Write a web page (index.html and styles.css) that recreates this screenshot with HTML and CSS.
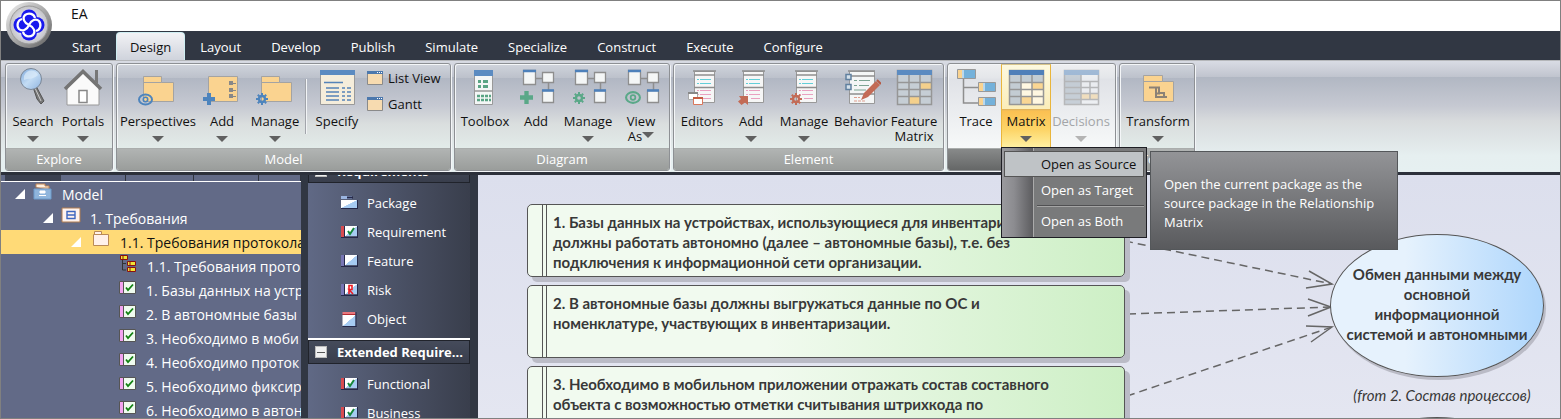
FILE: index.html
```html
<!DOCTYPE html>
<html lang="en">
<head>
<meta charset="utf-8">
<title>EA</title>
<link rel="stylesheet" href="styles.css">
</head>
<body>
<svg class="defs" aria-hidden="true">
  <defs>
    <linearGradient id="lens" x1="0" y1="0" x2="1" y2="1"><stop offset="0" stop-color="#7fa9dc"/><stop offset=".5" stop-color="#c3dcf4"/><stop offset="1" stop-color="#8fb4e0"/></linearGradient>
    <linearGradient id="diag" x1="0" y1="0" x2="1" y2="1"><stop offset=".5" stop-color="#fff"/><stop offset=".52" stop-color="#a6cbf2"/></linearGradient>
    <linearGradient id="ring" x1="0" y1="0" x2="1" y2="1"><stop offset="0" stop-color="#f4f4f4"/><stop offset=".5" stop-color="#a9a9a9"/><stop offset="1" stop-color="#5e5e5e"/></linearGradient>
    <radialGradient id="orb"><stop offset="0" stop-color="#fff"/><stop offset=".6" stop-color="#dcdcec"/><stop offset="1" stop-color="#c4c4c4"/></radialGradient>
    <symbol id="gear" viewBox="0 0 12 12"><g fill="none" stroke="currentColor"><circle cx="6" cy="6" r="3" stroke-width="2.4"/><path d="M6 0v2.500M6 9.500V12M0 6h2.500M9.500 6H12M1.800 1.800l1.800 1.800M8.400 8.400l1.800 1.800M1.800 10.200l1.800-1.800M8.400 3.600l1.800-1.800" stroke-width="2"/></g></symbol>
    <symbol id="plus" viewBox="0 0 12 12"><path d="M4 0h4v4h4v4H8v4H4V8H0V4h4z" fill="currentColor"/></symbol>
    <symbol id="eye" viewBox="0 0 15 12"><ellipse cx="7.500" cy="6" rx="6.500" ry="5" fill="none" stroke="currentColor" stroke-width="2"/><circle cx="7.500" cy="6" r="2.200" fill="none" stroke="currentColor" stroke-width="1.600"/></symbol>
    <symbol id="search" viewBox="0 0 40 40"><path d="M20 21l3-1 8 15-3 3-4-5z" fill="#777" stroke="#555"/><path d="M22 22l6 13" stroke="#ccc"/><circle cx="18" cy="13" r="10.500" fill="url(#lens)" stroke="#7b8796"/><path d="M11 14c4-2 9 0 14-5-3-6-11-6-14 1z" fill="#dcebfa" opacity=".7"/></symbol>
    <symbol id="home" viewBox="0 0 40 40"><path d="M32 4h3v15h-3z" fill="#777"/><path d="M4 19L20 5l16 14v20H4z" fill="#fafafa" stroke="#999"/><path d="M2 23L20 5.500 38 23" fill="none" stroke="#747474" stroke-width="3.500"/><path d="M16 24.500h8v12h-8z" fill="#fff" stroke="#888" stroke-width="1.500"/></symbol>
    <symbol id="persp" viewBox="0 1 40 40"><path d="M5.500 36.500v-25h18v6h12v19z" fill="#fad390" stroke="#a3a3a3"/><path d="M5.500 17.500h18" stroke="#a3a3a3"/><use href="#eye" x="0" y="28" width="15" height="13" color="#4d84bd"/></symbol>
    <symbol id="modadd" viewBox="0 1 40 40"><path d="M6.500 11.500h29v25h-29z" fill="#fad390" stroke="#a3a3a3"/><g fill="#888"><path d="M27 16h4v4h-4zM27 23h4v4h-4zM27 29h4v4h-4z"/><path d="M31 18.500h3M31 25.500h3M31 31.500h3" stroke="#888"/></g><use href="#plus" x="1" y="28" width="12" height="12" color="#4d84bd"/></symbol>
    <symbol id="modman" viewBox="0 1 40 40"><path d="M6.500 36.500v-25h18v6h12v19z" fill="#fad390" stroke="#a3a3a3"/><path d="M6.500 17.500h18" stroke="#a3a3a3"/><use href="#gear" x="1" y="28" width="12" height="12" color="#4d84bd"/></symbol>
    <symbol id="specify" viewBox="0 0 40 40"><path d="M3.500 4.500h34v34h-34z" fill="#f5eddb" stroke="#999"/><path d="M3 4h35v5H3z" fill="#5b8bc1"/><path d="M7 16.500h19M9 22h13M9 26h13M9 30h13M9 34h13" stroke="#5583b8" stroke-width="1.500"/><path d="M25 22h3M30 22h4M25 26h3M30 26h4M25 30h3M30 30h4M25 34h3M30 34h4" stroke="#5583b8" stroke-width="1.500"/></symbol>
    <symbol id="win" viewBox="0 0 16 14"><path d="M.5.5h15v13H.5z" fill="#f7dbb0" stroke="#8a8a8a"/><path d="M0 0h16v3H0z" fill="#4c78ad"/><path d="M10 1.500h1M12 1.500h1M14 1.500h1" stroke="#fff"/></symbol>
    <symbol id="toolbox" viewBox="0 0 40 40"><path d="M9.500 4.500h18v34h-18z" fill="#f4f6f6" stroke="#999"/><path d="M9 4h19v6H9z" fill="#5b8bc1"/><path d="M9 25h19" stroke="#999" stroke-width="1.500"/><g stroke="#59a484" stroke-width="3"><path d="M13 15.500h3M18 15.500h5M13 20.500h3M18 20.500h5"/><path d="M12 30h3M16 30h3M20 30h3M24 30h2M12 34h3M16 34h3M20 34h3M24 34h2" stroke-width="2.500"/></g></symbol>
    <symbol id="nodes" viewBox="0 0 40 40"><path d="M19 12.500h8M32.500 17v9" stroke="#8e8e8e" stroke-width="1.500"/><g fill="#f4f6f6" stroke="#8e8e8e" stroke-width="1.300"><path d="M7.500 4.500h12v14h-12zM26.500 6.500h11v10h-11zM26.500 24.500h11v12h-11z"/></g><path d="M7 5h13M26 24.500h12" stroke="#4d80ba" stroke-width="2.500"/></symbol>
    <symbol id="doc" viewBox="0 0 40 40"><path d="M12.500 5.500h20v31h-20z" fill="#f6f6f6" stroke="#999"/><path d="M11 5h23M12 9h21M12 21.500h21" stroke="#8e8e8e" stroke-width="1.500"/><path d="M15 13.500h2M18 13.500h11M15 17.500h2M18 17.500h11" stroke="#62cfd8"/><path d="M15 24.500h2M18 24.500h11M15 28.500h2M18 28.500h11M20 32.500h9" stroke="#e9a0c0"/></symbol>
    <symbol id="editors" viewBox="0 0 40 40"><use href="#doc"/><path d="M6.500 26.500h9v7h-9z" fill="#fff" stroke="#aaa"/><path d="M6 27h10" stroke="#888" stroke-width="2"/><path d="M11.500 31.500h9v7h-9z" fill="#fff" stroke="#d9775c"/><path d="M11 32h10" stroke="#c45c42" stroke-width="2"/></symbol>
    <symbol id="eladd" viewBox="0 0 40 40"><use href="#doc"/><path d="M8 30h9v9l-3-2.500-3.500 2.500-3.500-3.500L10 33z" fill="#c36b56"/></symbol>
    <symbol id="behavior" viewBox="0 0 40 40"><path d="M8.500 5.500h25v32h-25z" fill="#f4f6f6" stroke="#999"/><path d="M7 5h27M8 10h26M8 28h26" stroke="#8e8e8e" stroke-width="1.300"/><path d="M13 14.500h3M18 14.500h11M13 19.500h3M18 19.500h10M13 24h12" stroke="#7ba492"/><path d="M13 31.500h6M13 35h11" stroke="#df9d8d" stroke-dasharray="3 1"/><path d="M5 8.500h5v5H5zM5 18.500h5v5H5z" fill="#d4e0ea" stroke="#60809f" stroke-width="1.500"/><path d="M20 34l3-7 12-12 4 4-12 12z" fill="#c36b56"/><path d="M36 14l4 4" stroke="#b65843" stroke-width="2"/></symbol>
    <symbol id="fmatrix" viewBox="0 0 40 40"><path d="M3 4h35v35H3z" fill="#c6ced5"/><path d="M26 17h12v7H26zM15 31h11v8H15z" fill="#f4d08c"/><path d="M15 9v30M26 9v30M3 16.500h35M3 23.500h35M3 30.500h35M3.500 4.500h34v34h-34z" fill="none" stroke="#969696" stroke-width="1.500"/><path d="M3 4h35v5H3z" fill="#5b8bc1"/></symbol>
    <symbol id="matrix" viewBox="0 0 40 40"><path d="M3 4h35v35H3z" fill="#fff7e1"/><path d="M3 9h12v30H3zM15 9h23v7H15z" fill="#c3ccd3"/><path d="M26 16h12v8H26zM15 31h11v8H15z" fill="#fad693"/><path d="M15 9v30M26 9v30M3 16.500h35M3 23.500h35M3 30.500h35M3.500 4.500h34v34h-34z" fill="none" stroke="#969696" stroke-width="1.500"/><path d="M3 4h35v5H3z" fill="#4f7fb9"/></symbol>
    <symbol id="decisions" viewBox="0 0 40 40"><path d="M3 4h35v35H3z" fill="#f2f5f8"/><path d="M3 9h17v30H3z" fill="#a8b6c2"/><path d="M20 28h18v6H20z" fill="#fad693"/><path d="M20 9v30M29 15v19M3 15.500h35M3 21.500h35M3 27.500h35M3 33.500h35M3.500 4.500h34v34h-34z" fill="none" stroke="#888" stroke-width="1.500"/><path d="M3 4h35v5H3z" fill="#5b8bc1"/></symbol>
    <symbol id="trace" viewBox="0 0 40 40"><path d="M7.500 13v24H23M7.500 21.500H23" fill="none" stroke="#8e8e8e" stroke-width="1.500"/><g fill="#74b1da" stroke="#999"><path d="M1.500 3.500h18v9h-18zM22.500 16.500h17v9h-17zM22.500 31.500h17v8h-17z"/></g><path d="M2 4h4v8H2zM23 17h4v8h-4zM23 32h4v7h-4z" fill="#fad390"/><path d="M7 4v8M28 17v8M28 32v7" stroke="#fff"/></symbol>
    <symbol id="transform" viewBox="0 0 40 40"><path d="M5.500 35.500v-26h19v6h11v20z" fill="#fad390" stroke="#a3a3a3"/><path d="M5.500 15.500h19" stroke="#a3a3a3"/><path d="M11 21.500h10v6h-3M18 21.500v9.500h11M21 27h5v4" fill="none" stroke="#8b8276" stroke-width="2"/></symbol>
    <symbol id="req" viewBox="0 0 17 13"><path d="M.5.500h16v12H.5z" fill="#effbef" stroke="#555"/><path d="M1 1h3v11H1z" fill="#f2a4f0"/><path d="M4.500 1v11" stroke="#555"/><path d="M7 6.500l2 2.500 5-5.500" fill="none" stroke="#118011" stroke-width="1.800"/></symbol>
    <symbol id="tbreq" viewBox="0 0 17 13"><path d="M4 1h12v10H4z" fill="url(#diag)"/><path d="M0 1h3v11H0z" fill="#d84b50"/><path d="M0 12.500h17M16.500 1v12M3.500 1v11" stroke="#252849"/><path d="M7 6l2 3 4-6" fill="none" stroke="#16873a" stroke-width="2"/></symbol>
    <symbol id="tbfeat" viewBox="0 0 17 13"><path d="M4 1h12v10H4z" fill="url(#diag)"/><path d="M0 1h3v11H0z" fill="#7775b4"/><path d="M0 12.500h17M16.500 1v12M3.500 1v11" stroke="#252849"/></symbol>
    <symbol id="tbrisk" viewBox="0 0 17 13"><path d="M4 1h12v10H4z" fill="url(#diag)"/><path d="M0 1h3v11H0z" fill="#7775b4"/><path d="M0 12.500h17M16.500 1v12M3.500 1v11" stroke="#252849"/><path d="M8 11V2.500h3v4H8l4 4.500" fill="none" stroke="#ed1c24" stroke-width="1.600"/></symbol>
    <symbol id="tbpkg" viewBox="0 0 17 13"><path d="M0 0h11v3H0z" fill="#9bb5e0"/><path d="M6 1.500h6" stroke="#252849" stroke-width="2"/><path d="M0 4h16v8H0z" fill="url(#diag)"/><path d="M0 12.500h17M16.500 4v9" stroke="#252849"/></symbol>
    <symbol id="tbobj" viewBox="0 0 16 16"><path d="M1 4h13v11H1z" fill="url(#diag)"/><path d="M1 1h13v2H1z" fill="#e8777c"/><path d="M1 3.500h13" stroke="#b62b32"/><path d="M1 15.500h14M14.500 1v15" stroke="#252849"/></symbol>
  </defs>
</svg>
<div class="window">
  <header class="titlebar">EA</header>
  <button class="orb" aria-label="Application menu">
    <svg viewBox="0 0 48 48"><circle cx="24" cy="24" r="23" fill="url(#ring)"/><circle cx="24" cy="24" r="19" fill="url(#orb)" stroke="#999"/><g fill="#1919ee"><circle cx="24" cy="16.500" r="8"/><circle cx="31.500" cy="24" r="8"/><circle cx="24" cy="31.500" r="8"/><circle cx="16.500" cy="24" r="8"/></g><g fill="none" stroke="#fff" stroke-width="2.200"><path d="M24 24c-5-2-7-7-4-10 4-3 9-1 10 3M24 24c2-5 7-7 10-4 3 4 1 9-3 10M24 24c5 2 7 7 4 10-4 3-9 1-10-3M24 24c-2 5-7 7-10 4-3-4-1-9 3-10"/></g></svg>
  </button>
  <nav class="tabs">
    <button class="tab">Start</button><button class="tab active">Design</button><button class="tab">Layout</button><button class="tab">Develop</button><button class="tab">Publish</button><button class="tab">Simulate</button><button class="tab">Specialize</button><button class="tab">Construct</button><button class="tab">Execute</button><button class="tab">Configure</button>
  </nav>
  <section class="ribbon">
    <div class="group g-explore">
      <div class="tools">
        <button class="tool w50"><svg class="ico"><use href="#search"/></svg>Search<i class="caret"></i></button>
        <button class="tool w50"><svg class="ico"><use href="#home"/></svg>Portals<i class="caret"></i></button>
      </div>
      <div class="caption">Explore</div>
    </div>
    <div class="group g-model">
      <div class="tools">
        <button class="tool w82"><svg class="ico"><use href="#persp"/></svg>Perspectives<i class="caret"></i></button>
        <button class="tool w46"><svg class="ico"><use href="#modadd"/></svg>Add<i class="caret"></i></button>
        <button class="tool w60"><svg class="ico"><use href="#modman"/></svg>Manage<i class="caret"></i></button>
        <span class="divider"></span>
        <button class="tool w60"><svg class="ico"><use href="#specify"/></svg>Specify</button>
        <div class="stack">
          <button class="mini"><svg class="win"><use href="#win"/></svg>List View</button>
          <button class="mini"><svg class="win"><use href="#win"/></svg>Gantt</button>
        </div>
      </div>
      <div class="caption">Model</div>
    </div>
    <div class="group g-diagram">
      <div class="tools">
        <button class="tool w56"><svg class="ico"><use href="#toolbox"/></svg>Toolbox</button>
        <button class="tool w46"><svg class="ico" viewBox="0 0 40 40"><use href="#nodes"/><use href="#plus" x="4" y="25" width="13" height="13" color="#5aa888"/></svg>Add</button>
        <button class="tool w58"><svg class="ico" viewBox="0 0 40 40"><use href="#nodes"/><use href="#gear" x="5" y="26" width="12" height="12" color="#5aa888"/></svg>Manage<i class="caret"></i></button>
        <button class="tool w48"><svg class="ico" viewBox="0 0 40 40"><use href="#nodes"/><use href="#eye" x="4" y="25" width="16" height="13" color="#5aa888"/></svg>View<span class="inline">As<i class="caret"></i></span></button>
      </div>
      <div class="caption">Diagram</div>
    </div>
    <div class="group g-element">
      <div class="tools">
        <button class="tool w52"><svg class="ico"><use href="#editors"/></svg>Editors</button>
        <button class="tool w46"><svg class="ico"><use href="#eladd"/></svg>Add<i class="caret"></i></button>
        <button class="tool w60"><svg class="ico" viewBox="0 0 40 40"><use href="#doc"/><use href="#gear" x="6" y="27" width="12" height="12" color="#c36b56"/></svg>Manage<i class="caret"></i></button>
        <button class="tool w54"><svg class="ico"><use href="#behavior"/></svg>Behavior</button>
        <button class="tool w52"><svg class="ico"><use href="#fmatrix"/></svg>Feature<span class="inline">Matrix</span></button>
      </div>
      <div class="caption">Element</div>
    </div>
    <div class="group g-trace">
      <div class="tools">
        <button class="tool w50"><svg class="ico"><use href="#trace"/></svg>Trace</button>
        <button class="tool w50 open"><svg class="ico"><use href="#matrix"/></svg>Matrix<i class="caret"></i></button>
        <button class="tool w60" disabled><svg class="ico"><use href="#decisions"/></svg>Decisions<i class="caret"></i></button>
      </div>
      <div class="caption dark"></div>
    </div>
    <div class="group g-transform">
      <div class="tools">
        <button class="tool w72"><svg class="ico"><use href="#transform"/></svg>Transform<i class="caret"></i></button>
      </div>
      <div class="caption">Tools</div>
    </div>
  </section>
  <main class="work">
    <aside class="tree">
      <div class="tree-head"><span></span><span></span><span></span><span></span></div>
      <div class="row l1"><i class="open-mark"></i><svg class="ti" viewBox="0 0 20 18"><path d="M3 5V2h9v2h4v4" fill="#fdeedd" stroke="#c08452"/><path d="M2.500 6h14" stroke="#c08452"/><path d="M1 7h17v10H1z" fill="#8fb5dc" stroke="#6c9ccd"/><path d="M7 9h5v2H7zM6 13.500h7" fill="#fff" stroke="#fff"/></svg>Model</div>
      <div class="row l2"><i class="open-mark"></i><svg class="ti" viewBox="0 0 20 18"><path d="M1 2h18v14H1z" fill="#fff3ee" stroke="#b07c50"/><path d="M6 5.500h8v7H6zM6 9h8" fill="none" stroke="#3f67c0" stroke-width="1.400"/></svg>1. Требования</div>
      <div class="row l3 selected"><i class="open-mark"></i><svg class="ti" viewBox="0 0 20 18"><path d="M2.500 15.500V4.500h1V1.500h7v3h7v11z" fill="#fff1ea" stroke="#b98a58"/><path d="M3 4.500h9" stroke="#b98a58"/></svg>1.1. Требования протокола</div>
      <div class="row l4"><svg class="ti" viewBox="0 0 20 18"><path d="M4.500 5v11H8M4.500 9.500H8" fill="none" stroke="#333"/><path d="M2.500 1.500h7v4h-7zM9.500 7.500h8v4h-8zM9.500 13.500h8v4h-8z" fill="#f0e335" stroke="#8b1010"/><path d="M5 1v4M12 8v4M12 14v4" stroke="#8b1010"/></svg>1.1. Требования прото</div>
      <div class="row l4"><svg class="ti rq"><use href="#req"/></svg>1. Базы данных на устр</div>
      <div class="row l4"><svg class="ti rq"><use href="#req"/></svg>2. В автономные базы</div>
      <div class="row l4"><svg class="ti rq"><use href="#req"/></svg>3. Необходимо в моби</div>
      <div class="row l4"><svg class="ti rq"><use href="#req"/></svg>4. Необходимо проток</div>
      <div class="row l4"><svg class="ti rq"><use href="#req"/></svg>5. Необходимо фиксир</div>
      <div class="row l4"><svg class="ti rq"><use href="#req"/></svg>6. Необходимо в автон</div>
    </aside>
    <aside class="palette">
      <div class="scrolled">
        <h2 class="section"><span class="collapse"></span>Requirements</h2>
        <div class="items">
          <button class="item"><svg class="pi"><use href="#tbpkg"/></svg>Package</button>
          <button class="item"><svg class="pi"><use href="#tbreq"/></svg>Requirement</button>
          <button class="item"><svg class="pi"><use href="#tbfeat"/></svg>Feature</button>
          <button class="item"><svg class="pi"><use href="#tbrisk"/></svg>Risk</button>
          <button class="item"><svg class="pi tall"><use href="#tbobj"/></svg>Object</button>
        </div>
        <h2 class="section ruled"><span class="collapse"></span>Extended Require...</h2>
        <div class="items">
          <button class="item"><svg class="pi"><use href="#tbreq"/></svg>Functional</button>
          <button class="item"><svg class="pi"><use href="#tbreq"/></svg>Business</button>
        </div>
      </div>
    </aside>
    <section class="canvas">
      <svg class="links" width="1082" height="244" viewBox="478 175 1082 244">
        <g fill="none" stroke="#666" stroke-width="1.500">
          <path d="M1125 241L1332 284M1128 314L1331 307M1127 396L1332 327" stroke-dasharray="8 5"/>
          <path d="M1309 271L1332 284 1306 288M1308 299L1331 307 1308 316M1306 326L1332 327 1311 342"/>
        </g>
      </svg>
      <article class="req n1">1. Базы данных на устройствах, использующиеся для инвентаризации,<br>должны работать автономно (далее – автономные базы), т.е. без<br>подключения к информационной сети организации.</article>
      <article class="req n2">2. В автономные базы должны выгружаться данные по ОС и<br>номенклатуре, участвующих в инвентаризации.</article>
      <article class="req n3">3. Необходимо в мобильном приложении отражать состав составного<br>объекта с возможностью отметки считывания штрихкода по</article>
      <article class="process p1">Обмен данными между<br>основной<br>информационной<br>системой и автономными</article>
      <div class="origin">(from 2. Состав процессов)</div>
      <article class="process p2"></article>
    </section>
  </main>
  <div class="menu" role="menu">
    <button class="entry hot" role="menuitem">Open as Source</button>
    <button class="entry" role="menuitem">Open as Target</button>
    <hr>
    <button class="entry" role="menuitem">Open as Both</button>
  </div>
  <div class="tip" role="tooltip">Open the current package as the source package in the Relationship Matrix</div>
</div>
</body>
</html>
```
FILE: styles.css
```css
* { box-sizing: border-box; }
body { margin: 0; background: #808080; font-family: "Open Sans", "Noto Sans", sans-serif; font-size: 13px; color: #111; }
button { font: inherit; color: inherit; border: 0; padding: 0; background: none; }
.defs { position: absolute; width: 0; height: 0; }
.window { position: relative; display: flex; flex-direction: column; height: 100vh; border: 1px solid #808080; overflow: hidden; white-space: nowrap; }
.titlebar { flex: none; height: 30px; padding-left: 70px; background: #fff; line-height: 26px; font-size: 14px; }
.orb { position: absolute; left: 4px; top: 0; width: 48px; height: 48px; z-index: 2; }
.orb svg { display: block; width: 48px; height: 48px; }

.tabs { flex: none; display: flex; height: 29px; padding: 1px 0 0 56px; background: #313743; color: #fff; }
.tab { padding: 0 15px; line-height: 30px; }
.tab.active { padding: 0 13px; color: #111; background: linear-gradient(#f2f2f5, #cfd3dc); border: 1px solid #cfeef2; border-bottom: 0; border-radius: 4px 4px 0 0; line-height: 28px; }

.ribbon { flex: none; display: flex; gap: 3px; height: 115px; padding: 2px 0 5px 4px; border-top: 1px solid #b5b7ba; border-bottom: 3px solid #2c303b; background: linear-gradient(#d9dce4 0, #c0c4ce 16px, #b1b7c3 16px, #c6c9d2 45px, #d8dbdd 60px, #e6eff0 95px, #e6f0f1 100%); }
.group { display: flex; flex-direction: column; height: 108px; border: 1px solid #8d9094; border-radius: 3px; box-shadow: inset 1px 1px 0 #f4f6f8, 1px 1px 0 #f4f6f8; overflow: hidden; background: linear-gradient(#d0d4dc 0, #bcc1cb 14px, #b1b7c3 14px, #c6c9d2 42px, #dadede 60px, #e2ebe9 84px); }
.g-explore { width: 108px; }
.g-model { width: 335px; }
.g-diagram { width: 216px; }
.g-element { width: 271px; }
.g-trace { width: 169px; background: linear-gradient(#eeeff1, #e4e6ea 14px, #e0e2e7 15px, #f7f9f9 84px); }
.g-transform { width: 76px; }
.tools { flex: 1; display: flex; padding: 0 2px; }
.g-model .tools { padding: 0; }
.caption { height: 22px; text-align: center; line-height: 20px; color: #fff; background: linear-gradient(#b1b4b3, #9a9d9b); border-top: 1px solid #aaadac; }
.caption.dark { background: linear-gradient(#888a8a, #656767); }
.tool { flex: none; display: flex; flex-direction: column; align-items: center; padding-top: 2px; line-height: 15px; }
.ico { flex: none; width: 40px; height: 40px; margin-bottom: 8px; }
.w46 { width: 46px; }
.w48 { width: 48px; }
.w50 { width: 50px; }
.w52 { width: 52px; }
.w54 { width: 54px; }
.w56 { width: 56px; }
.w58 { width: 58px; }
.w60 { width: 60px; }
.w72 { width: 72px; }
.w82 { width: 82px; }
.caret { width: 0; height: 0; margin-top: 7px; border: 6px solid transparent; border-top-color: #606060; border-bottom: 0; }
.inline { display: flex; }
.inline .caret { margin-top: 3px; }
.g-trace .tools { padding-left: 3px; }
.tool.open { border: 1px solid #e9b53c; border-top-color: #d8c58c; padding-top: 1px; background: linear-gradient(#fdf9df 0, #fbedb9 44px, #d9b060 44px, #fbc052 46px, #fdd568 65px, #fff3a8 84px); }
.tool:disabled { color: #a3a5a8; }
.tool:disabled .ico { opacity: .5; }
.tool:disabled .caret { border-top-color: #b4b4b4; }
.divider { width: 1px; height: 55px; margin: 15px 1px 0 0; background: #a2a5ab; box-shadow: 1px 0 0 #f2f4f6; }
.stack { display: flex; flex-direction: column; gap: 8px; padding-top: 5px; }
.mini { display: flex; align-items: center; gap: 5px; height: 18px; }
.win { width: 16px; height: 14px; }

.work { flex: 1; display: flex; min-height: 0; background: #313743; }
.tree { flex: none; width: 300px; overflow: hidden; background: #626a87; color: #fff; font-size: 14px; }
.tree-head { display: grid; grid-template-columns: 125px 68px 65px 1fr; height: 7px; border-bottom: 1px solid #fff; }
.tree-head span { border-right: 1px solid #30343f; }
.tree-head span:first-child { background: linear-gradient(90deg, #626a87 4px, #3b4050 4px, #3b4050 60px, #626a87 60px); }
.row { display: flex; align-items: center; height: 24px; }
.row.selected { background: #ffda77; color: #111; }
.l1 { padding-left: 14px; }
.l2 { padding-left: 42px; }
.l3 { padding-left: 70px; }
.l4 { padding-left: 117px; }
.open-mark { width: 10px; height: 10px; margin-right: 8px; background: #fff; clip-path: polygon(100% 0, 100% 100%, 0 100%); }
.l3 .open-mark { margin-right: 10px; }
.open-mark { flex: none; }
.ti { flex: none; width: 20px; height: 18px; margin: 0 9px 6px 0; }
.ti.rq { width: 17px; height: 13px; margin: 0 10px 5px 1px; }

.palette { flex: none; width: 162px; margin: 0 8px 0 7px; overflow: hidden; background: linear-gradient(90deg, #606985, #393e4c); color: #fff; }
.scrolled { margin-top: -16px; }
.section { display: flex; align-items: center; gap: 10px; height: 24px; margin: 0; padding-left: 6px; border: 1px solid #20232b; background: linear-gradient(#454b5b, #393e4c); font-size: 13px; font-weight: 700; }
.ruled { box-shadow: 0 -2px 0 #fff; }
.collapse { width: 12px; height: 12px; border: 1px solid #bbb; background: linear-gradient(#555, #555) center / 8px 1px no-repeat, #f0f0f0; }
.items { display: flex; flex-direction: column; padding: 5px 0 7px; }
.item { display: flex; align-items: center; gap: 9px; height: 29px; padding-left: 33px; }
.pi { width: 17px; height: 13px; }
.pi.tall { height: 16px; }

.canvas { position: relative; flex: 1; overflow: hidden; background: linear-gradient(#dcdfed, #e4e6f1); color: #383838; font-family: Lato, "Open Sans", sans-serif; font-size: 15px; line-height: 20px; font-weight: 700; }
.links { position: absolute; left: 0; top: 0; }
.req { position: absolute; left: 49px; width: 598px; height: 73px; padding: 7px 0 0 25px; border: 1px solid #555; border-radius: 5px; box-shadow: 5px 5px 0 #babbc6; background: linear-gradient(90deg, transparent 14px, #555 14px, #555 15px, transparent 15px, transparent 18px, #555 18px, #555 19px, transparent 19px), linear-gradient(90deg, #f1faef 40%, #cdefc5); }
.n1 { top: 29px; }
.n2 { top: 110px; }
.n3 { top: 191px; }
.process { position: absolute; left: 852px; width: 214px; height: 143px; padding-top: 29px; border: 1px solid #555; border-radius: 50%; box-shadow: 2px 3px 0 #babbc6; background: linear-gradient(90deg, #e6f2fd 35%, #aed6fc); text-align: center; }
.process.p1 { top: 59px; }
.process.p2 { top: 242px; }
.origin { position: absolute; left: 852px; width: 224px; top: 210px; text-align: center; font-weight: 400; font-style: italic; }

.menu { position: absolute; left: 1000px; top: 146px; width: 146px; padding: 3px 2px; border: 1px solid #1e1e24; display: flex; flex-direction: column; z-index: 3; color: #fff; background: linear-gradient(90deg, #9a9a9e 0, #8c8c90 12px, #5c5c5f 31px, #aaa 31px, #aaa 32px, #797a7b 32px); }
.entry { height: 26px; padding-left: 37px; text-align: left; }
.entry.hot { border: 1px solid #555; padding-left: 36px; background: #bfc3c6; color: #111; }
.menu hr { width: 107px; margin: 2px 0 1px auto; border: 0; border-top: 1px solid #505052; border-bottom: 1px solid #a5a5a5; }
.tip { position: absolute; left: 1149px; top: 150px; width: 248px; padding: 23px 12px 17px 13px; border: 1px solid #54575a; background: linear-gradient(#939497, #595a5d); color: #fff; line-height: 19px; white-space: normal; z-index: 3; }
```
